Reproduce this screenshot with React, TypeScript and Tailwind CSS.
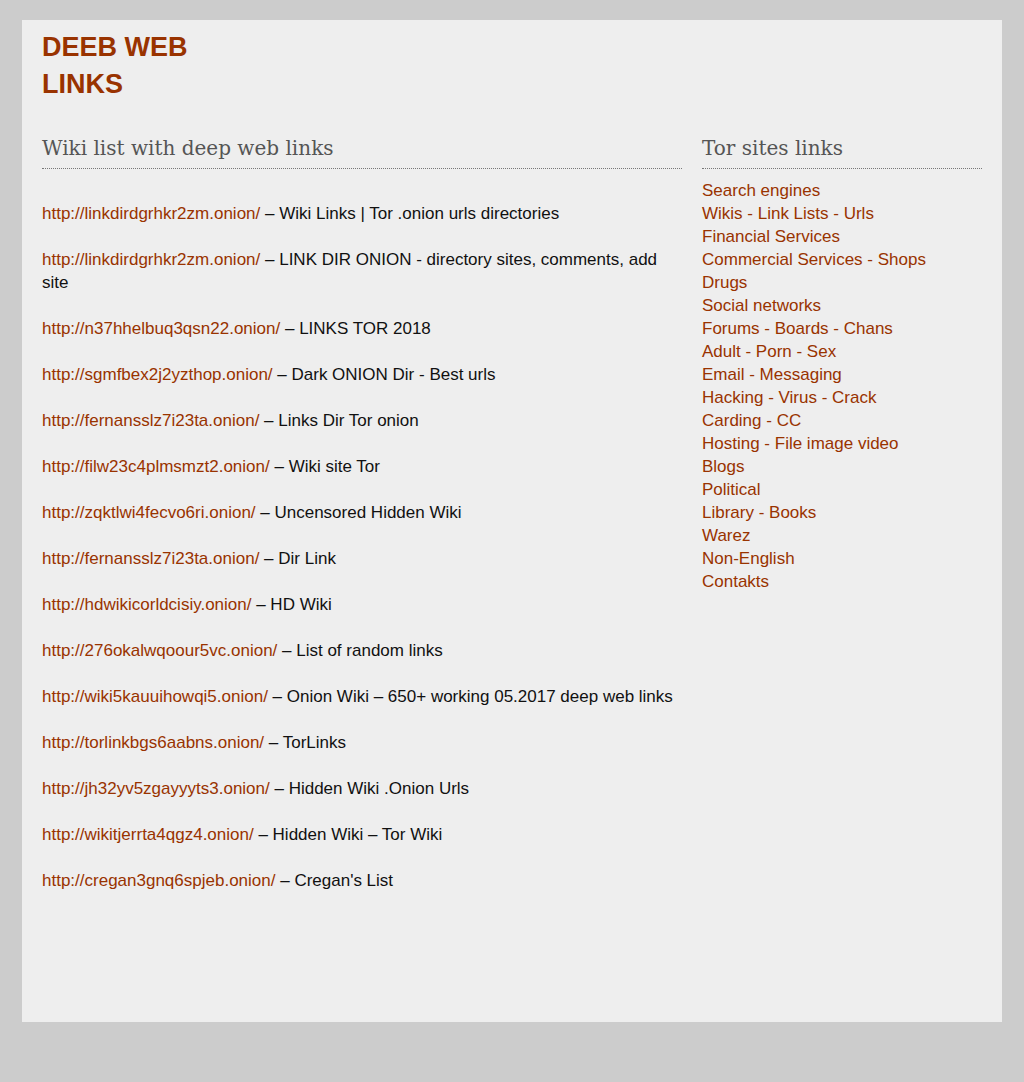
import React from 'react';

const wikiLinks = [
  { url: 'http://linkdirdgrhkr2zm.onion/', desc: 'Wiki Links | Tor .onion urls directories' },
  { url: 'http://linkdirdgrhkr2zm.onion/', desc: 'LINK DIR ONION - directory sites, comments, add site' },
  { url: 'http://n37hhelbuq3qsn22.onion/', desc: 'LINKS TOR 2018' },
  { url: 'http://sgmfbex2j2yzthop.onion/', desc: 'Dark ONION Dir - Best urls' },
  { url: 'http://fernansslz7i23ta.onion/', desc: 'Links Dir Tor onion' },
  { url: 'http://filw23c4plmsmzt2.onion/', desc: 'Wiki site Tor' },
  { url: 'http://zqktlwi4fecvo6ri.onion/', desc: 'Uncensored Hidden Wiki' },
  { url: 'http://fernansslz7i23ta.onion/', desc: 'Dir Link' },
  { url: 'http://hdwikicorldcisiy.onion/', desc: 'HD Wiki' },
  { url: 'http://276okalwqoour5vc.onion/', desc: 'List of random links' },
  { url: 'http://wiki5kauuihowqi5.onion/', desc: 'Onion Wiki – 650+ working 05.2017 deep web links' },
  { url: 'http://torlinkbgs6aabns.onion/', desc: 'TorLinks' },
  { url: 'http://jh32yv5zgayyyts3.onion/', desc: 'Hidden Wiki .Onion Urls' },
  { url: 'http://wikitjerrta4qgz4.onion/', desc: 'Hidden Wiki – Tor Wiki' },
  { url: 'http://cregan3gnq6spjeb.onion/', desc: "Cregan's List" },
];

const categories = [
  'Search engines',
  'Wikis - Link Lists - Urls',
  'Financial Services',
  'Commercial Services - Shops',
  'Drugs',
  'Social networks',
  'Forums - Boards - Chans',
  'Adult - Porn - Sex',
  'Email - Messaging',
  'Hacking - Virus - Crack',
  'Carding - CC',
  'Hosting - File image video',
  'Blogs',
  'Political',
  'Library - Books',
  'Warez',
  'Non-English',
  'Contakts',
];

export default function App() {
  return (
    <div className="min-h-screen bg-[#cccccc] pt-5 font-['Liberation_Sans',Arial,sans-serif]">
      <div className="mx-auto h-[1002px] w-[980px] bg-[#eeeeee] px-5 pt-[9px]">
        <h1 className="w-[180px] text-[27px] font-bold leading-[37px] text-[#993300]">DEEB WEB LINKS</h1>

        <div className="mt-[30px] flex gap-5">
          <div className="w-[640px]">
            <h2 className="border-b border-dotted border-[#777] pb-[5px] font-['DejaVu_Serif',Georgia,serif] text-[20px] leading-[30px] text-[#555]">
              Wiki list with deep web links
            </h2>
            <div className="mt-[33px] text-[17px] leading-[23px] text-[#111]">
              {wikiLinks.map((l, i) => (
                <p key={i} className="mb-[23px]">
                  <a href="#" className="text-[#993300]">{l.url}</a> – {l.desc}
                </p>
              ))}
            </div>
          </div>

          <div className="w-[280px]">
            <h2 className="border-b border-dotted border-[#777] pb-[5px] font-['DejaVu_Serif',Georgia,serif] text-[20px] leading-[30px] text-[#555]">
              Tor sites links
            </h2>
            <ul className="mt-[10px] text-[17px] leading-[23px]">
              {categories.map((c) => (
                <li key={c}>
                  <a href="#" className="text-[#993300]">{c}</a>
                </li>
              ))}
            </ul>
          </div>
        </div>
      </div>
    </div>
  );
}
